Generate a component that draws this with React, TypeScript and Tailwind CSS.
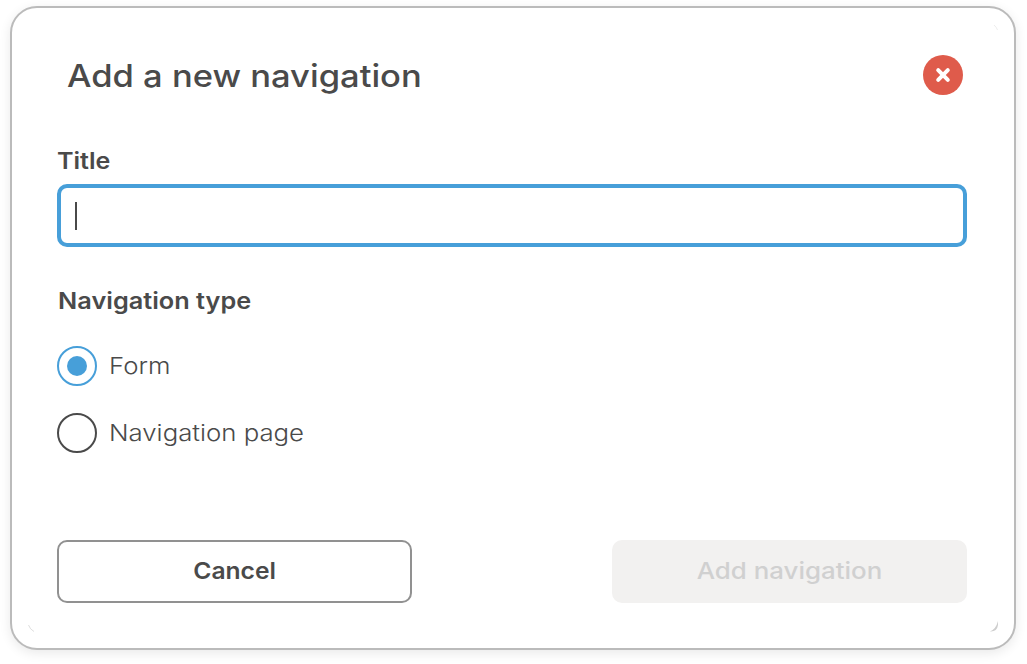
import { useState } from "react";

const types = ["Form", "Navigation page"];

export default function App() {
  const [selected, setSelected] = useState("Form");

  return (
    <main className="h-[664px] w-[1027px] overflow-hidden bg-white px-[10px] pt-[6px] font-['Inter',sans-serif] text-[#4a4a4a]">
      <section className="relative flex h-[644px] w-[1006px] flex-col rounded-[27px] border-2 border-[#bbbbbb] bg-white px-[45px] pt-[47px] shadow-[0_3px_12px_rgba(0,0,0,0.09)]">
        <header className="flex h-10 items-center justify-between pr-[6px] pl-[10px]">
          <h1 className="origin-left scale-x-[1.114] pt-[2px] text-[31px] leading-10 font-medium whitespace-nowrap">Add a new navigation</h1>
          <button aria-label="Close" className="flex size-10 items-center justify-center rounded-full bg-[#df5b4b]">
            <svg viewBox="0 0 16 16" className="size-4" fill="none" stroke="white" strokeWidth="4" strokeLinecap="round">
              <path d="M3.2 3.2 12.8 12.8M12.8 3.2 3.2 12.8" />
            </svg>
          </button>
        </header>

        <label className="mt-[51px] flex h-[30px] items-center">
          <span className="origin-left scale-x-[1.09] text-[23px] font-semibold">Title</span>
        </label>
        <div className="mt-[8px] flex h-[63px] w-[910px] shrink-0 items-center rounded-[10px] border-4 border-[#479fd9] pl-[14px]">
          <span className="h-7 w-[2px] bg-[#4a4a4a]" />
        </div>

        <h2 className="mt-[39px] flex h-[30px] items-center">
          <span className="origin-left scale-x-[1.1] pl-px text-[23px] font-semibold whitespace-nowrap">Navigation type</span>
        </h2>
        <div className="mt-[30px] flex flex-col gap-[27px]">
          {types.map((type) => (
            <button key={type} onClick={() => setSelected(type)} className="flex h-10 items-center gap-[12px]">
              <span className={selected === type ? "flex size-10 items-center justify-center rounded-full border-2 border-[#479fd9]" : "flex size-10 items-center justify-center rounded-full border-2 border-[#4a4a4a]"}>
                {selected === type && <span className="size-5 rounded-full bg-[#479fd9]" />}
              </span>
              <span className="origin-left scale-x-[1.12] text-[23px] font-light whitespace-nowrap">{type}</span>
            </button>
          ))}
        </div>

        <footer className="mt-[87px] flex w-[910px] justify-between text-[23px] font-semibold">
          <button className="flex h-[63px] w-[355px] items-center justify-center rounded-[10px] border-2 border-[#919191]">
            <span className="scale-x-[1.07]">Cancel</span>
          </button>
          <button disabled className="flex h-[63px] w-[355px] items-center justify-center rounded-[10px] bg-[#f2f1f0] text-[#d0d0d0]">
            <span className="scale-x-[1.125] font-medium whitespace-nowrap">Add navigation</span>
          </button>
        </footer>

        <svg aria-hidden="true" viewBox="0 0 12 12" className="absolute right-4 bottom-4 size-3">
          <path d="M12 1Q10 9 4 11.5Q11 12 12 5Z" fill="#cecece" />
        </svg>
        <svg aria-hidden="true" viewBox="0 0 12 12" className="absolute bottom-4 left-4 size-3" fill="none" stroke="#dedede">
          <path d="M0.5 5Q2 9.5 6 11.5" />
        </svg>
        <svg aria-hidden="true" viewBox="0 0 12 12" className="absolute top-4 right-4 size-3" fill="none" stroke="#ededed">
          <path d="M8 1Q10.5 3 11.5 6" />
        </svg>
      </section>
    </main>
  );
}
